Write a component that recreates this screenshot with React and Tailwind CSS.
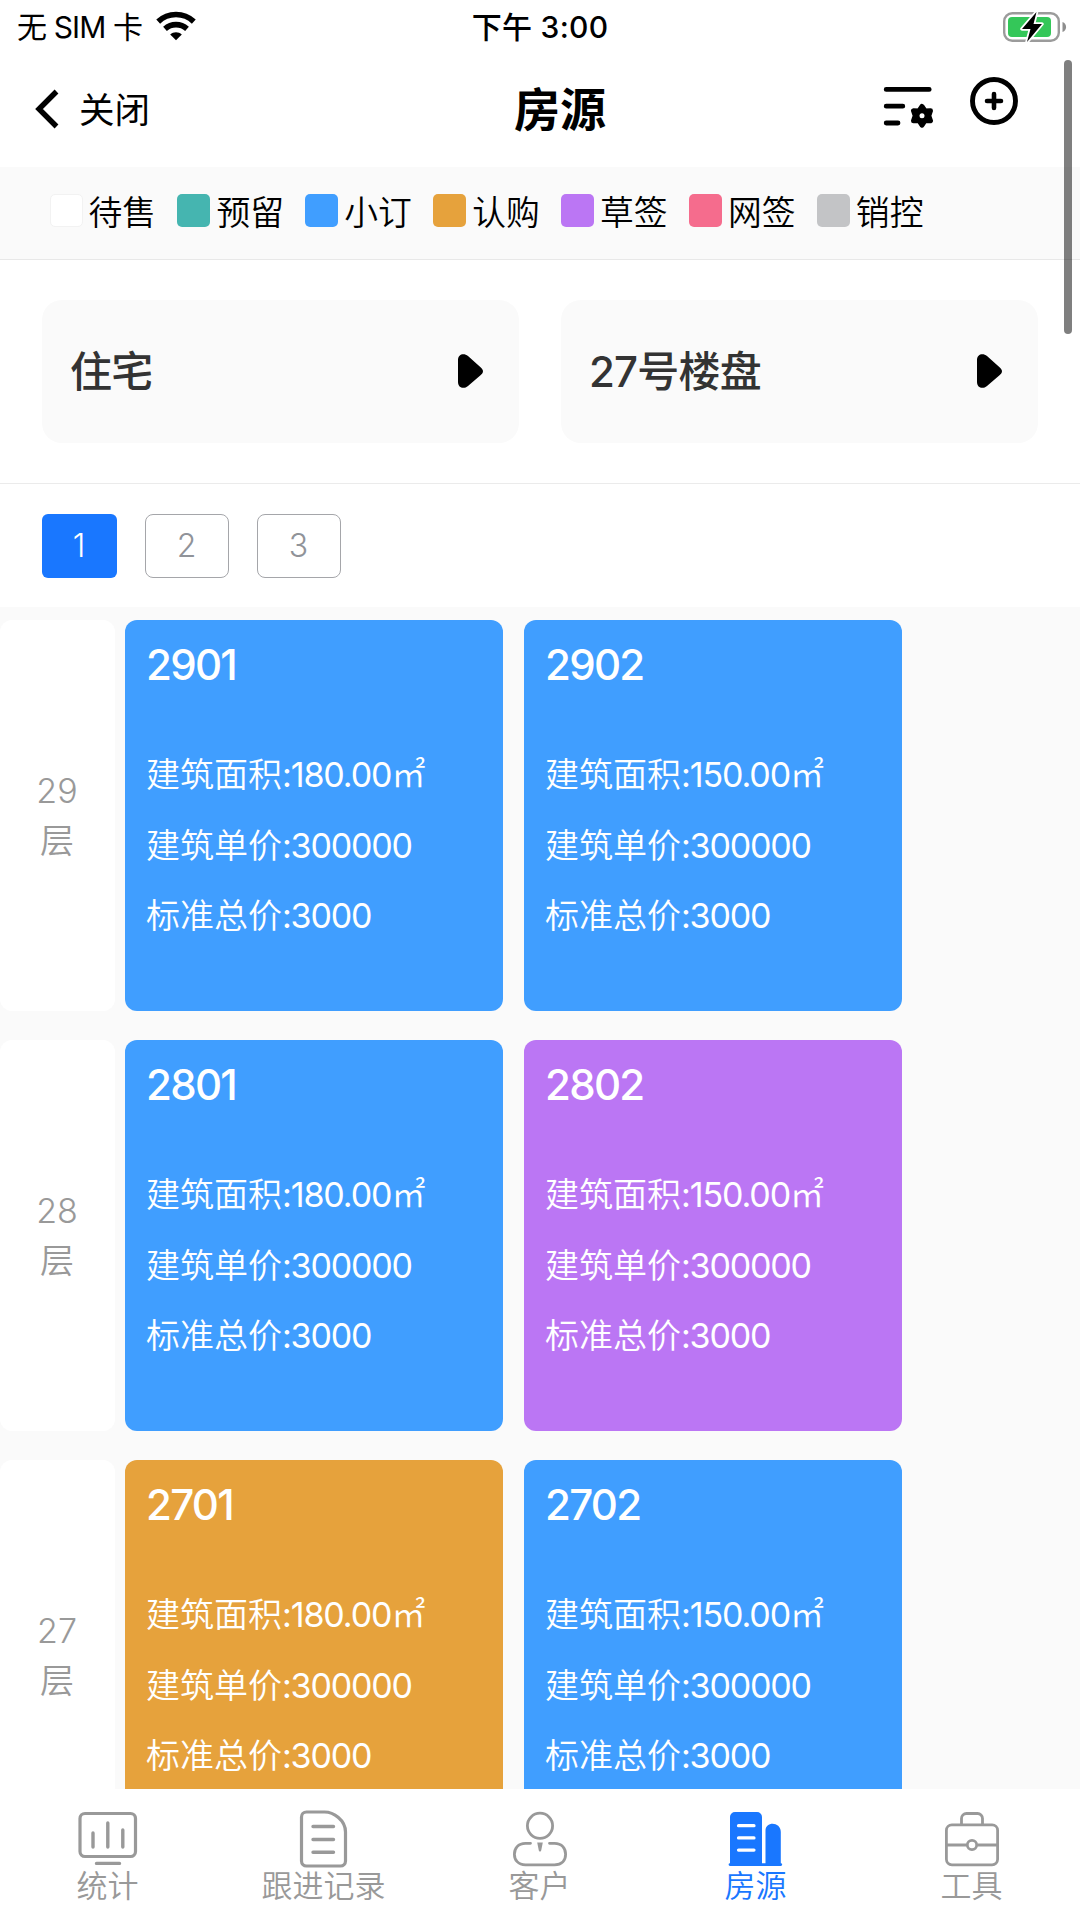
import React from 'react';

const legend = [
  { label: '待售', color: 'bg-white border border-[#f2f2f2]' },
  { label: '预留', color: 'bg-[#45b5b0]' },
  { label: '小订', color: 'bg-[#409eff]' },
  { label: '认购', color: 'bg-[#e6a23c]' },
  { label: '草签', color: 'bg-[#bb76f4]' },
  { label: '网签', color: 'bg-[#f56c8d]' },
  { label: '销控', color: 'bg-[#c3c4c6]' },
];

const floors = [
  {
    floor: 29,
    rooms: [
      { no: '2901', area: '180.00', color: 'bg-[#409eff]' },
      { no: '2902', area: '150.00', color: 'bg-[#409eff]' },
    ],
  },
  {
    floor: 28,
    rooms: [
      { no: '2801', area: '180.00', color: 'bg-[#409eff]' },
      { no: '2802', area: '150.00', color: 'bg-[#bb76f4]' },
    ],
  },
  {
    floor: 27,
    rooms: [
      { no: '2701', area: '180.00', color: 'bg-[#e6a23c]' },
      { no: '2702', area: '150.00', color: 'bg-[#409eff]' },
    ],
  },
];

function WifiIcon() {
  return (
    <svg width="40" height="30" viewBox="0 0 40 30" fill="none">
      <path d="M2.200 10.600A26 26 0 0 1 37.800 10.600" stroke="#000" strokeWidth="5.600" />
      <path d="M9 17.800A16.500 16.500 0 0 1 31 17.800" stroke="#000" strokeWidth="5.600" />
      <path d="M20 29.200l-5.800-5.600c3.200-3.200 8.400-3.200 11.600 0z" fill="#000" />
    </svg>
  );
}

function BatteryIcon() {
  return (
    <svg width="64" height="32" viewBox="0 0 64 32" fill="none">
      <rect x="1.200" y="2.200" width="54.600" height="27.600" rx="8" stroke="#9b9b9b" strokeWidth="2.400" />
      <rect x="5" y="6" width="43" height="20" rx="4" fill="#34c759" />
      <path d="M59.500 11c4.800 1.500 4.800 8.500 0 10z" fill="#8e8e8e" />
      <path d="M33.500 1L19 18h8.500L24 31l15-18h-8.500z" fill="#000" stroke="#fff" strokeWidth="3.500" strokeLinejoin="round" />
      <path d="M33.500 1L19 18h8.500L24 31l15-18h-8.500z" fill="#000" />
    </svg>
  );
}

function FilterIcon() {
  return (
    <svg width="52" height="44" viewBox="0 0 52 44" fill="none">
      <path d="M4.200 5.400h43M4.200 22.200H20.800M4.200 39H16" stroke="#000" strokeWidth="4.800" strokeLinecap="round" />
      <path
        d="M40 22.500l3 4.500 5.500-.2-1.700 5 1.700 5-5.500-.2-3 4.500-3-4.500-5.500.2 1.700-5-1.700-5 5.500.2z"
        fill="#000"
        stroke="#000"
        strokeWidth="5"
        strokeLinejoin="round"
      />
      <circle cx="40" cy="31.800" r="2.500" fill="#fff" />
    </svg>
  );
}

function PlusIcon() {
  return (
    <svg width="48" height="48" viewBox="0 0 48 48" fill="none" stroke="#000" strokeLinecap="round">
      <circle cx="24" cy="24" r="21.500" strokeWidth="4.900" />
      <path d="M24 17v14M17 24h14" strokeWidth="4.600" />
    </svg>
  );
}

function TriangleIcon() {
  return (
    <svg width="25" height="34" viewBox="0 0 25 34">
      <path d="M0 6C0 0 6-1.500 10 2L22.800 13.500C25.700 16 25.700 18.500 22.800 21L10 32C6 35.500 0 34 0 28z" />
    </svg>
  );
}

function StatsIcon() {
  return (
    <svg width="60" height="56" viewBox="0 0 60 56" fill="none" stroke="currentColor" strokeWidth="3.200" strokeLinecap="round">
      <rect x="2" y="2.500" width="55.500" height="43" rx="5" />
      <path d="M15 22v14M29.800 12v24M44.800 19v17M18.500 52.400h23" strokeWidth="3.400" />
    </svg>
  );
}

function RecordIcon() {
  return (
    <svg width="60" height="58" viewBox="0 0 60 58" fill="none" stroke="currentColor" strokeWidth="3.200" strokeLinecap="round">
      <path d="M12.500 2h18c9 0 21 8 21 20v29a5 5 0 0 1-5 5h-34a5 5 0 0 1-5-5V7a5 5 0 0 1 5-5z" />
      <path d="M19 16.500h20.500M19 29.500h20.500M19 42.200h20.500" strokeWidth="3.400" />
    </svg>
  );
}

function CustomerIcon() {
  return (
    <svg width="60" height="56" viewBox="0 0 60 56" fill="none" stroke="currentColor" strokeWidth="2.800" strokeLinecap="round">
      <circle cx="30" cy="14.800" r="12.600" />
      <path d="M20.500 32.300H15.500C8 32.300 4.400 37.500 4.400 43.200S8 53.800 15.500 53.800h29C52 53.800 55.600 49 55.600 43.200S52 32.300 44.500 32.300H39.500" />
      <path d="M27.200 31.500h5.600l-1.500 7.500c-.4 2-2.200 2-2.600 0z" fill="currentColor" stroke="none" />
    </svg>
  );
}

function HouseIcon() {
  return (
    <svg width="60" height="56" viewBox="0 0 60 56" fill="none">
      <path
        d="M4 52.200V6a5 5 0 0 1 5-5h22a5 5 0 0 1 5 5v46.200h3.500V19.500c0-9.500 15.300-9 15.300 1.500v31.200a1.400 1.400 0 0 1 0 2.800H4a1.400 1.400 0 0 1 0-2.800z"
        fill="currentColor"
      />
      <path d="M12.500 14.700H28M12.500 26.900H28M12.500 39.100H28" stroke="#fff" strokeWidth="3.200" strokeLinecap="round" />
    </svg>
  );
}

function ToolsIcon() {
  return (
    <svg width="60" height="56" viewBox="0 0 60 56" fill="none" stroke="currentColor" strokeWidth="2.800">
      <rect x="4.400" y="13.800" width="51.200" height="40" rx="5.500" />
      <path d="M19.500 13.500V7.500a5 5 0 0 1 5-5h11a5 5 0 0 1 5 5v6M5 34h19.500M35.500 34H55" />
      <circle cx="30" cy="34" r="4.700" />
    </svg>
  );
}

const tabs = [
  { label: '统计', icon: StatsIcon },
  { label: '跟进记录', icon: RecordIcon },
  { label: '客户', icon: CustomerIcon },
  { label: '房源', icon: HouseIcon, active: true },
  { label: '工具', icon: ToolsIcon },
];

function RoomCard({ room }) {
  return (
    <div className={`w-[378px] h-[391px] rounded-xl px-[21px] text-white ${room.color}`}>
      <h3 className="pt-[14px] text-[42px] leading-[62px] font-[550] tracking-[-1.700px]">{room.no}</h3>
      <div className="mt-[44px] text-[34px] leading-[70.500px] font-[350] whitespace-nowrap">
        <p>建筑面积<span className="font-normal tracking-[-1.100px]">:{room.area}</span>㎡</p>
        <p>建筑单价<span className="font-normal tracking-[-1.200px]">:300000</span></p>
        <p>标准总价<span className="font-normal tracking-[-1.200px]">:3000</span></p>
      </div>
    </div>
  );
}

function SelectBox({ label }) {
  return (
    <div className="flex-1 h-[143px] rounded-[20px] bg-[#fafafa] pl-[28px] pr-[36px] flex items-center justify-between">
      <span className="text-[42px] leading-none font-medium tracking-[-0.800px] text-[#333]">{label}</span>
      <span className="-mt-px"><TriangleIcon /></span>
    </div>
  );
}

export default function App() {
  return (
    <div className="relative flex flex-col w-[1080px] h-[1920px] overflow-hidden bg-white text-black font-['Inter','Noto_Sans_CJK_SC',sans-serif]">
      <div className="h-[54px] shrink-0 grid grid-cols-3 items-center pl-[17px] pr-[13px]">
        <div className="flex items-center">
          <span className="text-[30px] leading-none tracking-[-0.900px]">无 SIM 卡</span>
          <span className="ml-[14px] -mt-[2px]"><WifiIcon /></span>
        </div>
        <span className="text-center text-[30px] leading-none font-medium tracking-[0.300px] -ml-[4px]">下午 3:00</span>
        <div className="flex justify-end -mt-px"><BatteryIcon /></div>
      </div>

      <header className="h-[113px] shrink-0 flex items-center pl-[34px] pr-[62px] pb-[3px]">
        <div className="flex-1 flex items-center gap-[19px]">
          <svg width="26" height="40" viewBox="0 0 26 40" fill="none">
            <path d="M22.500 2.500L5 20l17.500 17.500" stroke="#000" strokeWidth="5.400" />
          </svg>
          <span className="text-[35.500px] leading-none pt-[3px]">关闭</span>
        </div>
        <h1 className="text-[46px] leading-none font-bold">房源</h1>
        <div className="w-[412px] flex items-start justify-end gap-[36px] -mt-[14px]">
          <span className="mt-[7px]"><FilterIcon /></span>
          <PlusIcon />
        </div>
      </header>

      <div className="h-[93px] shrink-0 flex items-center gap-[20.900px] pl-[49.500px] bg-[#fafafa] border-b border-[#e8e8e8]">
        {legend.map((item) => (
          <div key={item.label} className="flex items-center gap-[6px]">
            <span className={`size-[33px] rounded-[5px] -mt-[5px] ${item.color}`} />
            <span className="w-[68px] text-[33.800px] leading-none font-[350]">{item.label}</span>
          </div>
        ))}
      </div>

      <div className="h-[224px] shrink-0 flex items-center gap-[42px] px-[42px] border-b border-[#ebebeb]">
        <SelectBox label="住宅" />
        <SelectBox label="27号楼盘" />
      </div>

      <div className="h-[123px] shrink-0 flex items-center gap-[28px] pl-[41.500px] text-[32px] font-[350]">
        <button className="w-[75px] h-16 rounded-md bg-[#1977ff] text-white">1</button>
        <button className="w-[84px] h-16 rounded-lg border border-[#a5a6aa] text-[#909399]">2</button>
        <button className="w-[84px] h-16 rounded-lg border border-[#a5a6aa] text-[#909399]">3</button>
      </div>

      <main className="flex-1 min-h-0 overflow-hidden bg-[#fafafa] pt-[13px] flex flex-col gap-[29px]">
        {floors.map((row) => (
          <section key={row.floor} className="flex shrink-0">
            <div className="w-[115px] rounded-xl bg-white flex flex-col items-center justify-center pr-px text-[34px] leading-[50px] font-[350] text-[#999]">
              <span>{row.floor}</span>
              <span>层</span>
            </div>
            <div className="ml-[10px] flex gap-[21px]">
              {row.rooms.map((room) => (
                <RoomCard key={room.no} room={room} />
              ))}
            </div>
          </section>
        ))}
      </main>

      <nav className="h-[131px] shrink-0 grid grid-cols-5 bg-white pt-[21px]">
        {tabs.map((tab) => (
          <div key={tab.label} className={`flex flex-col items-center ${tab.active ? 'text-[#1977ff]' : 'text-[#999]'}`}>
            <span className="h-[58px] flex items-center"><tab.icon /></span>
            <span className="mt-[2px] text-[31px] leading-[32px] font-[350] -ml-px">{tab.label}</span>
          </div>
        ))}
      </nav>

      <div className="absolute right-2 top-[60px] w-2 h-[274px] rounded-full bg-black/50" />
    </div>
  );
}
